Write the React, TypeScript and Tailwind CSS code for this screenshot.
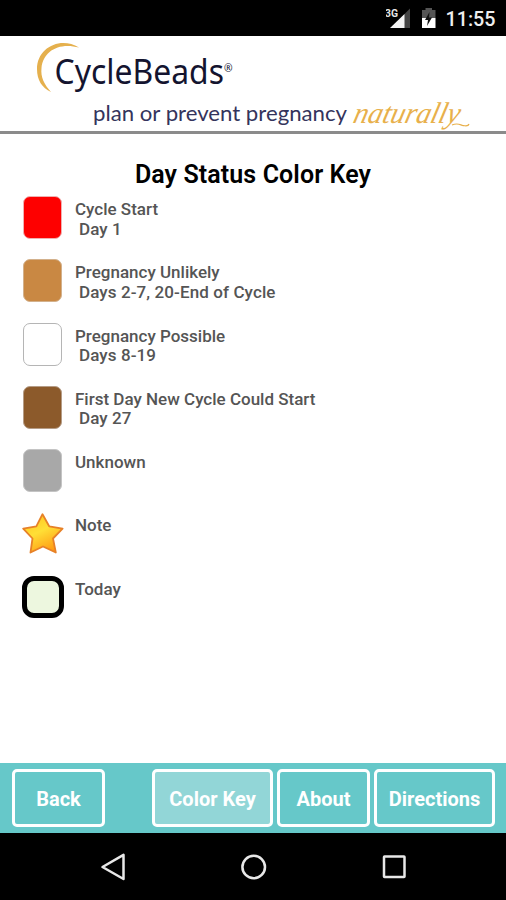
import { clsx } from 'clsx';

const statuses = [
  { label: 'Cycle Start', days: 'Day 1', swatch: 'bg-[#fe0000] border-[#f0b0b0]' },
  { label: 'Pregnancy Unlikely', days: 'Days 2-7, 20-End of Cycle', swatch: 'bg-[#c98843] border-[#d3b18c]' },
  { label: 'Pregnancy Possible', days: 'Days 8-19', swatch: 'bg-white border-[#b5b5b5]' },
  { label: 'First Day New Cycle Could Start', days: 'Day 27', swatch: 'bg-[#8c5a2b] border-[#b59c86]' },
  { label: 'Unknown', swatch: 'bg-[#a8a8a8] border-[#c4c4c4]' },
  { label: 'Note', icon: 'star' },
  { label: 'Today', icon: 'today' },
];

function StatusBar() {
  return (
    <div className="h-9 bg-black flex items-center justify-end shrink-0">
      <svg className="w-[120px] h-9" viewBox="0 0 120 36">
        <path d="M24 8.500 V28 H18 V14.500 Z" fill="#444" />
        <path d="M4 28 L18.500 14 V28 Z" fill="#f4f4f4" />
        <text x="-1" y="17" fontSize="11.500" fontWeight="700" fill="#e6e6e6" textLength="13" lengthAdjust="spacingAndGlyphs">3G</text>
        <path d="M36 10 H39.500 V8 H46 V10 H49.500 V18 H36 Z" fill="#555" />
        <path d="M36 18 H49.500 V28 H36 Z" fill="#fff" />
        <path d="M43.500 12 L39 20 H42 L41 26 L46 17.500 H43 Z" fill="#111" />
        <text x="59.500" y="26.300" fontSize="19.500" fontWeight="500" fill="#eee" textLength="50" lengthAdjust="spacingAndGlyphs">11:55</text>
      </svg>
    </div>
  );
}

function Header() {
  return (
    <header className="h-[98px] shrink-0 border-b-[3px] border-[#8b8b8b] bg-white">
      <svg className="w-full h-[95px]" viewBox="0 36 506 95" overflow="visible">
        <path d="M79 47.500 C60 36 37 48 37 69 C37 80 42 88 51 92 C44 84 40.500 77 41.500 68 C43 51 59 42 79 47.500 Z" fill="#e5b04d" />
        <text fontFamily="'Noto Sans', 'Open Sans', sans-serif" fill="#14142f" x="54.500" y="84" fontSize="34" textLength="178" lengthAdjust="spacingAndGlyphs">
          CycleBeads
          <tspan fontSize="11" dy="-12">®</tspan>
        </text>
        <text x="93" y="121" fontSize="21.500" fontFamily="Lato, sans-serif" fill="#34345c" textLength="254" lengthAdjust="spacingAndGlyphs">plan or prevent pregnancy</text>
        <text
          transform="translate(352 123) skewX(-14)"
          fontSize="30"
          fontStyle="italic"
          fontFamily="'Liberation Serif', serif"
          fill="#e8b04b"
          textLength="106"
          lengthAdjust="spacingAndGlyphs"
        >
          naturally
        </text>
        <path d="M452 125 C459 122 461 126 463.500 125.500 C466 126 468.500 126 469 124" fill="none" stroke="#e8b04b" strokeWidth="1.200" />
      </svg>
    </header>
  );
}

function StarIcon() {
  return (
    <svg className="w-[42px] h-[42px]" viewBox="0 0 42 42">
      <defs>
        <linearGradient id="star" x1="0.2" y1="0" x2="0.7" y2="1">
          <stop offset="0" stopColor="#ffc41f" />
          <stop offset="0.45" stopColor="#ffdf36" />
          <stop offset="1" stopColor="#ff9711" />
        </linearGradient>
      </defs>
      <path
        d="M20.500 2.200 L27.200 14.300 L40.600 16.700 L31 26.500 L33.800 40.500 L21 34.500 L8.500 40.500 L10.500 26.500 L1.200 16.700 L14.300 14.300 Z"
        fill="url(#star)"
        stroke="#e78128"
        strokeWidth="1.800"
        strokeLinejoin="round"
      />
    </svg>
  );
}

function Marker({ icon, swatch }: { icon?: string; swatch?: string }) {
  if (icon === 'star') return <StarIcon />;
  if (icon === 'today') {
    return <div className="w-[42px] h-[42px] rounded-[12px] border-[5px] border-black bg-[#edf7df]" />;
  }
  return <div className={clsx('w-[39px] h-[43px] rounded-[7px] border', swatch)} />;
}

function NavButton({ label, className }: { label: string; className: string }) {
  return (
    <button
      className={clsx(
        'h-[58px] rounded-[5px] border-[3px] border-white text-white text-[20px] font-bold flex items-center justify-center whitespace-nowrap pt-px',
        className,
      )}
    >
      {label}
    </button>
  );
}

export default function App() {
  return (
    <div className="w-[506px] h-[900px] bg-white flex flex-col overflow-hidden font-['Roboto',sans-serif]">
      <StatusBar />
      <Header />

      <main className="flex-1 pt-[25px]">
        <h1 className="text-center text-[25px] leading-8 tracking-[0.1px] font-semibold text-black">Day Status Color Key</h1>
        <ul className="pt-[5px]">
          {statuses.map((status) => (
            <li key={status.label} className="h-[63.300px] flex">
              <div className="w-[75px] pl-[10px] flex justify-center shrink-0">
                <Marker icon={status.icon} swatch={status.swatch} />
              </div>
              <div className="pt-1 text-[17px] leading-[19.500px] font-medium text-[#555] whitespace-pre">
                <p>{status.label}</p>
                {status.days && <p className="pl-1 tracking-[0.1px]">{status.days}</p>}
              </div>
            </li>
          ))}
        </ul>
      </main>

      <nav className="h-[70px] shrink-0 bg-[#66c8c9] pl-3 pr-[11px] pt-1.5 flex">
        <NavButton label="Back" className="w-[93px] mr-[47px]" />
        <NavButton label="Color Key" className="w-[121px] mr-1 bg-[#92d6d7]" />
        <NavButton label="About" className="w-[93px] mr-1" />
        <NavButton label="Directions" className="w-[121px]" />
      </nav>

      <footer className="h-[67px] shrink-0 bg-black">
        <svg className="w-full h-full" viewBox="0 833 506 67" fill="none" stroke="#e8e8e8" strokeWidth="2.500" strokeLinejoin="round">
          <path d="M102.500 867 L123.500 854.800 V879 Z" />
          <circle cx="253.700" cy="867" r="11.300" />
          <rect x="384" y="856.500" width="20.500" height="20.500" rx="0.500" />
        </svg>
      </footer>
    </div>
  );
}
